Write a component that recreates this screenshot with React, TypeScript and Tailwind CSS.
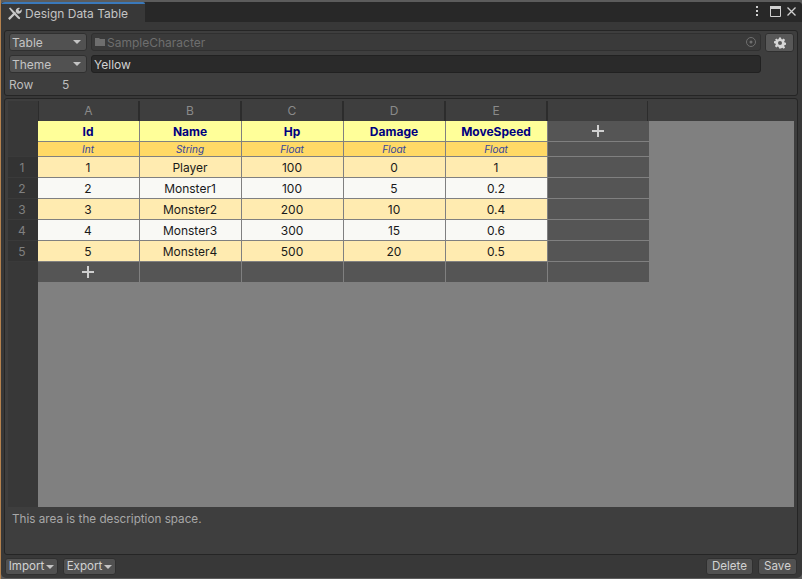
import React from "react";

const font = { fontFamily: '"Inter","Liberation Sans",sans-serif' };
const cols = ["A", "B", "C", "D", "E"];
const names = ["Id", "Name", "Hp", "Damage", "MoveSpeed"];
const types = ["Int", "String", "Float", "Float", "Float"];
const rows = [
  ["1", "Player", "100", "0", "1"],
  ["2", "Monster1", "100", "5", "0.2"],
  ["3", "Monster2", "200", "10", "0.4"],
  ["4", "Monster3", "300", "15", "0.6"],
  ["5", "Monster4", "500", "20", "0.5"],
];

function Caret() {
  return <span className="w-0 h-0 border-l-[4px] border-r-[4px] border-t-[4px] border-l-transparent border-r-transparent border-t-[#c4c4c4]" />;
}

function Drop({ label }: { label: string }) {
  return (
    <div className="w-[78px] h-[18px] rounded-[3px] bg-[#515151] border border-[#303030] flex items-center justify-between pl-[2px] pr-[5px] text-[12px] text-[#c4c4c4]">
      <span className="pt-[1px]">{label}</span>
      <Caret />
    </div>
  );
}

function Btn({ label, caret, w }: { label: string; caret?: boolean; w: string }) {
  return (
    <div className={`${w} h-[17px] rounded-[3px] bg-[#515151] border border-[#303030] flex items-center justify-center gap-[2px] text-[11.6px] text-[#d2d2d2]`}>
      <span>{label}</span>
      {caret && <Caret />}
    </div>
  );
}

function Plus({ size = 14 }: { size?: number }) {
  return (
    <svg width={size} height={size} viewBox="0 0 14 14">
      <path d="M6 1h2v5h5v2H8v5H6V8H1V6h5z" fill="#cfcfcf" />
    </svg>
  );
}

function Cell({ className, children }: { className: string; children?: React.ReactNode }) {
  return (
    <div className={`w-[102px] shrink-0 h-full flex items-center justify-center border-r border-b border-[#808080] pr-[1px] ${className}`}>
      {children}
    </div>
  );
}

export default function App() {
  return (
    <div style={font} className="w-[802px] h-[579px] overflow-hidden bg-[#5c5c5c] border-l border-l-[#b5824e] pt-[2px]">
      <div className="w-[801px] h-[576px] rounded-t-[4px] rounded-b-[5px] bg-[#383838] flex flex-col overflow-hidden">
        {/* tab bar */}
        <div className="h-[20px] shrink-0 bg-[#282828] flex items-stretch">
          <div className="w-[144px] h-[20px] bg-[#383838] border-t-2 border-[#3a79bb] flex items-center pl-[6px] pt-[1px] gap-[3px] text-[12px] text-[#c4c4c4] rounded-t-[2px]">
            <svg width="15" height="15" viewBox="0 0 16 16" fill="none">
              <path d="M2 14 L9 7" stroke="#c8c8c8" strokeWidth="2.4" />
              <path d="M9.5 6.5a3.5 3.5 0 0 1 4.5-4.500l-2 2 1.500 1.500 2-2a3.500 3.500 0 0 1-4.500 4.500z" fill="#c8c8c8" />
              <path d="M2 2.500 3.500 1.500 8 6l5.500 6 .5 2-2-.5L6.500 8z" fill="#c8c8c8" />
            </svg>
            <span>Design Data Table</span>
          </div>
          <div className="flex-1" />
          <div className="flex items-center pr-[6px] pb-[2px]">
            <svg width="4" height="12" viewBox="0 0 4 12"><path d="M1 1h2v2H1zM1 5h2v2H1zM1 9h2v2H1z" fill="#d0d0d0" /></svg>
            <svg width="11" height="11" viewBox="0 0 11 11" className="ml-[11px]" fill="none"><path d="M.5.5h10v10H.5z" stroke="#d0d0d0" /><path d="M0 0h11v3H0z" fill="#d0d0d0" /></svg>
            <svg width="9" height="9" viewBox="0 0 9 9" className="ml-[6px]" fill="none"><path d="M.5.5l8 8M8.500.5l-8 8" stroke="#d0d0d0" strokeWidth="1.300" /></svg>
          </div>
        </div>

        {/* settings box */}
        <div className="mt-[8px] ml-[3px] mr-[4px] h-[66px] shrink-0 rounded-[3px] border border-[#252525] bg-[#3e3e3e] pt-[2px] pl-[4px] text-[12px]">
          <div className="flex items-start gap-[4px] h-[18px]">
            <Drop label="Table" />
            <div className="w-[670px] h-[18px] rounded-[3px] bg-[#3a3a3a] border border-[#303030] flex items-center pl-[3px] text-[#6e6e6e]">
              <svg width="10" height="10" viewBox="0 0 10 10" className="mr-[2px]"><path d="M0 1h4l1 1h5v7H0z" fill="#6e6e6e" /></svg>
              <span className="flex-1 pt-[1px]">SampleCharacter</span>
              <svg width="12" height="12" viewBox="0 0 12 12" className="mr-[3px]" fill="none"><circle cx="6" cy="6" r="4.500" stroke="#707070" /><circle cx="6" cy="6" r="1.500" fill="#707070" /></svg>
            </div>
            <div className="w-[29px] h-[19px] rounded-[3px] bg-[#585858] border border-[#303030] flex items-center justify-center">
              <svg width="12" height="12" viewBox="0 0 24 24"><path fillRule="evenodd" d="M10 1h4l.6 3.200 2.100.9L19.400 3.200l2.800 2.800-1.900 2.700.9 2.100 3 .6v4l-3 .6-.9 2.100 1.900 2.700-2.800 2.800-2.700-1.900-2.100.9L14 23h-4l-.6-3.100-2.100-.9-2.700 1.900L1.800 18l1.900-2.700-.9-2.100-3-.6v-4l3-.6.9-2.100L1.800 6l2.800-2.800 2.700 1.900 2.100-.9zM12 8a4 4 0 1 0 0 8 4 4 0 0 0 0-8z" fill="#d6d6d6" /></svg>
            </div>
          </div>
          <div className="flex items-start gap-[4px] h-[18px] mt-[4px]">
            <Drop label="Theme" />
            <div className="w-[670px] h-[18px] rounded-[3px] bg-[#2a2a2a] border border-[#212121] flex items-center pl-[2px] pt-[1px] text-[#d2d2d2]">Yellow</div>
          </div>
          <div className="flex items-center h-[18px] mt-[3px] text-[#bdbdbd]">
            <span className="w-[53px]">Row</span>
            <span>5</span>
          </div>
        </div>

        {/* table box */}
        <div className="mt-[2px] ml-[3px] mr-[4px] flex-1 min-h-0 rounded-[3px] border border-[#252525] bg-[#3e3e3e] flex flex-col">
          <div className="h-[406px] shrink-0 ml-[3px] mr-[3px] mt-[2px] flex">
            {/* row headers */}
            <div className="w-[30px] shrink-0 bg-[#383838] flex flex-col text-[12px] text-[#808080]">
              <div className="h-[56px] shrink-0 border-b border-[#3a3a3a]" />
              {rows.map((r) => (
                <div key={r[0]} className="h-[21px] shrink-0 flex items-center justify-center bg-[#333333] border-b border-[#3a3a3a] pr-[2px] pt-[1px]">{r[0]}</div>
              ))}
            </div>
            <div className="flex-1 min-w-0 flex flex-col bg-[#808080]">
              {/* column letters */}
              <div className="h-[20px] shrink-0 flex bg-[#3e3e3e] text-[12px] text-[#8a8a8a]">
                {cols.map((c, i) => (
                  <div key={c} className={`w-[102px] shrink-0 flex items-center justify-center border-r-2 border-[#2c2c2c] ${i === 0 ? "border-l" : ""}`}>{c}</div>
                ))}
                <div className="w-[100px] shrink-0 border-r border-[#2c2c2c]" />
                <div className="flex-1 bg-[#3e3e3e]" />
              </div>
              {/* names */}
              <div className="h-[21px] shrink-0 flex">
                {names.map((n) => (
                  <Cell key={n} className="bg-[#ffff99] text-[12px] font-bold text-[#000080] pt-[1px]">{n}</Cell>
                ))}
                <Cell className="bg-[#555555] w-[101px]"><Plus /></Cell>
              </div>
              {/* types */}
              <div className="h-[15px] shrink-0 flex">
                {types.map((t, i) => (
                  <Cell key={i} className="bg-[#ffd966] text-[10px] italic text-[#34459c] overflow-hidden">{t}</Cell>
                ))}
                <Cell className="bg-[#555555] w-[101px]" />
              </div>
              {/* data */}
              {rows.map((r, i) => (
                <div key={r[0]} className="h-[21px] shrink-0 flex">
                  {r.map((v, j) => (
                    <Cell key={j} className={`${i % 2 === 0 ? "bg-[#ffebb0]" : "bg-[#f9f9f5]"} text-[12px] text-[#1a1a1a] pt-[1px]`}>{v}</Cell>
                  ))}
                  <Cell className="bg-[#555555] w-[101px]" />
                </div>
              ))}
              {/* add row */}
              <div className="h-[20px] shrink-0 flex">
                <div className="w-[102px] shrink-0 h-full flex items-center justify-center bg-[#555555] border-r border-[#808080] pr-[1px]"><Plus /></div>
                {[0, 1, 2, 3].map((k) => (
                  <div key={k} className="w-[102px] shrink-0 h-full bg-[#555555] border-r border-[#808080]" />
                ))}
                <div className="w-[101px] shrink-0 h-full bg-[#555555]" />
              </div>
            </div>
          </div>
          <div className="pl-[7px] pt-[4px] text-[11.7px] text-[#a8a8a8]">This area is the description space.</div>
        </div>

        {/* footer */}
        <div className="h-[23px] shrink-0 flex items-start pt-[3px] pl-[4px] pr-[5px] gap-[5px]">
          <Btn label="Import" caret w="w-[53px]" />
          <Btn label="Export" caret w="w-[53px]" />
          <div className="flex-1" />
          <Btn label="Delete" w="w-[47px]" />
          <Btn label="Save" w="w-[39px]" />
        </div>
      </div>
    </div>
  );
}
